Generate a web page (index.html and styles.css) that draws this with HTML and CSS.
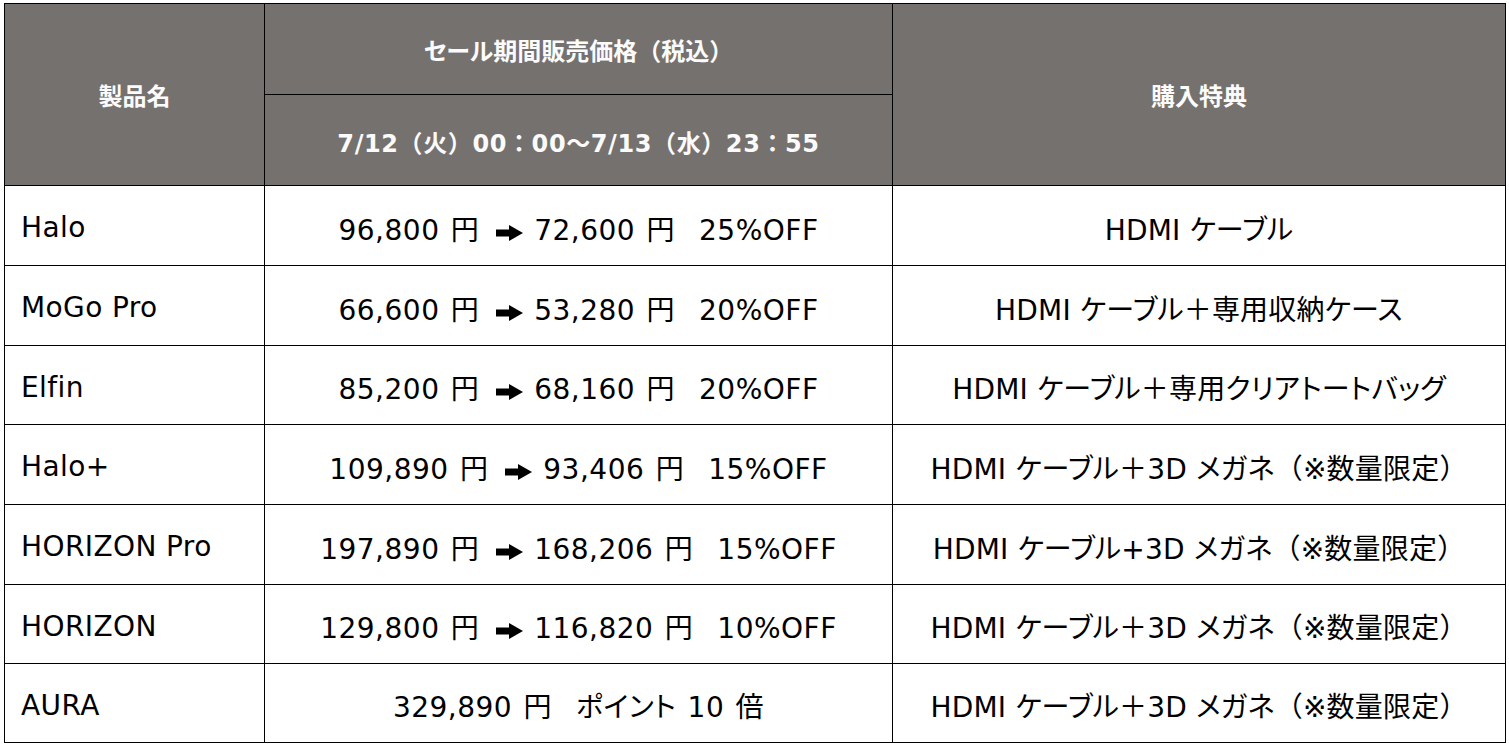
FILE: index.html
```html
<!DOCTYPE html>
<html lang="ja">
<head>
<meta charset="utf-8">
<link rel="stylesheet" href="styles.css">
</head>
<body>
<table class="sale">
  <colgroup>
    <col class="c-name">
    <col class="c-price">
    <col class="c-bonus">
  </colgroup>
  <thead>
    <tr class="h1">
      <th rowspan="2">製品名</th>
      <th><span class="kana">セール</span>期間販売価格（税込）</th>
      <th rowspan="2">購入特典</th>
    </tr>
    <tr class="h2">
      <th class="date">7/12（火）00：00～7/13（水）23：55</th>
    </tr>
  </thead>
  <tbody>
    <tr class="r80">
      <td class="name">Halo</td>
      <td class="price">96,800 円 <svg class="arr" viewBox="0 0 27 16"><rect x="0" y="4.5" width="14" height="7"/><polygon points="13,0 27,8 13,16"/></svg> 72,600 円<span class="gap"></span>25%OFF</td>
      <td class="bonus">HDMI <span class="kana">ケーブル</span></td>
    </tr>
    <tr class="r80">
      <td class="name">MoGo Pro</td>
      <td class="price">66,600 円 <svg class="arr" viewBox="0 0 27 16"><rect x="0" y="4.5" width="14" height="7"/><polygon points="13,0 27,8 13,16"/></svg> 53,280 円<span class="gap"></span>20%OFF</td>
      <td class="bonus">HDMI <span class="kana">ケーブル</span>＋専用収納<span class="kana">ケース</span></td>
    </tr>
    <tr class="r79">
      <td class="name">Elfin</td>
      <td class="price">85,200 円 <svg class="arr" viewBox="0 0 27 16"><rect x="0" y="4.5" width="14" height="7"/><polygon points="13,0 27,8 13,16"/></svg> 68,160 円<span class="gap"></span>20%OFF</td>
      <td class="bonus">HDMI <span class="kana">ケーブル</span>＋専用<span class="kana">クリアトートバッグ</span></td>
    </tr>
    <tr class="r80">
      <td class="name">Halo+</td>
      <td class="price">109,890 円 <svg class="arr" viewBox="0 0 27 16"><rect x="0" y="4.5" width="14" height="7"/><polygon points="13,0 27,8 13,16"/></svg> 93,406 円<span class="gap"></span>15%OFF</td>
      <td class="bonus">HDMI <span class="kana">ケーブル</span>＋3D <span class="kana">メガネ</span>（※数量限定）</td>
    </tr>
    <tr class="r80">
      <td class="name">HORIZON Pro</td>
      <td class="price">197,890 円 <svg class="arr" viewBox="0 0 27 16"><rect x="0" y="4.5" width="14" height="7"/><polygon points="13,0 27,8 13,16"/></svg> 168,206 円<span class="gap"></span>15%OFF</td>
      <td class="bonus">HDMI <span class="kana">ケーブル</span>+3D <span class="kana">メガネ</span>（※数量限定）</td>
    </tr>
    <tr class="r79">
      <td class="name">HORIZON</td>
      <td class="price">129,800 円 <svg class="arr" viewBox="0 0 27 16"><rect x="0" y="4.5" width="14" height="7"/><polygon points="13,0 27,8 13,16"/></svg> 116,820 円<span class="gap"></span>10%OFF</td>
      <td class="bonus">HDMI <span class="kana">ケーブル</span>＋3D <span class="kana">メガネ</span>（※数量限定）</td>
    </tr>
    <tr class="r79">
      <td class="name">AURA</td>
      <td class="price">329,890 円<span class="gap"></span><span class="kana">ポイント</span> 10 倍</td>
      <td class="bonus">HDMI <span class="kana">ケーブル</span>＋3D <span class="kana">メガネ</span>（※数量限定）</td>
    </tr>
  </tbody>
</table>
</body>
</html>
```

FILE: styles.css
```css
html, body {
  margin: 0;
  padding: 0;
  background: #ffffff;
}

body {
  padding: 3px 0 0 4px;
  font-family: "DejaVu Sans", "Noto Sans CJK JP", sans-serif;
  color: #000;
}

.sale {
  border-collapse: collapse;
  table-layout: fixed;
  width: 1501px;
}

.c-name { width: 260px; }
.c-price { width: 628px; }
.c-bonus { width: 613px; }

.sale th,
.sale td {
  border: 1px solid #000;
  padding: 0;
  vertical-align: middle;
  white-space: nowrap;
}

.sale th {
  background: #75716f;
  color: #fbfbfb;
  font-weight: bold;
  font-size: 24px;
  text-align: center;
}

.sale th.date {
  letter-spacing: 0.6px;
  padding-top: 2px;
}

.kana {
  font-feature-settings: "palt";
}

.h1 { height: 91px; }
.h2 { height: 91px; }
.r80 { height: 80px; }
.r79 { height: 79px; }

.sale td {
  font-size: 28px;
  text-align: center;
  padding-top: 4px;
}

.sale td.name {
  text-align: left;
  padding-left: 16px;
  letter-spacing: 0.4px;
}

.price {
  word-spacing: 2px;
  letter-spacing: 0.5px;
}

.bonus {
  letter-spacing: 0.2px;
}

.arr {
  width: 27px;
  height: 16px;
  margin-left: 5px;
  vertical-align: -1px;
  fill: #000;
}

.gap {
  display: inline-block;
  width: 24px;
}
```
